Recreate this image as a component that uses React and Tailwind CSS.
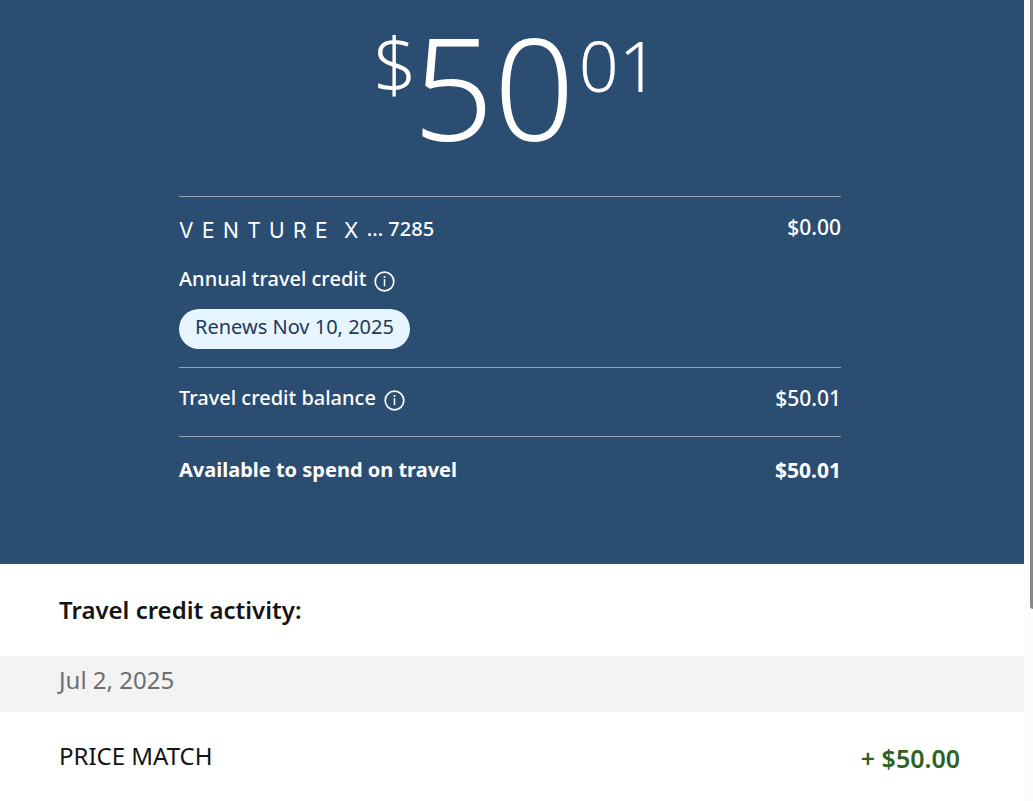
const summary = {
  dollars: "50",
  cents: "01",
  lastFour: "7285",
  annualCredit: "$0.00",
  renews: "Renews Nov 10, 2025",
  balance: "$50.01",
  available: "$50.01",
};

const activity = [
  { id: 1, date: "Jul 2, 2025", title: "PRICE MATCH", amount: "+ $50.00" },
];

function InfoButton({ label }) {
  return (
    <button type="button" aria-label={label} className="ml-2 mt-1 shrink-0">
      <svg width="21" height="21" viewBox="0 0 21 21" fill="none">
        <circle cx="10.5" cy="10.5" r="9.3" stroke="currentColor" strokeWidth="1.7" />
        <path d="M10.5 8.2v7" stroke="currentColor" strokeWidth="1.5" />
        <circle cx="10.5" cy="5.9" r="1" fill="currentColor" />
      </svg>
    </button>
  );
}

export default function App() {
  return (
    <div className="flex h-screen overflow-hidden bg-white font-['Noto_Sans','Open_Sans',sans-serif]">
      <main className="min-w-0 flex-1">
        <section className="bg-[#2b4d71] pr-1 pb-20 text-white">
          {/* Total */}
          <div className="flex justify-center pl-3 font-light">
            <span className="-mr-1 pt-4 text-[76px] leading-[94px]">$</span>
            <span className="mr-1 text-[142px] leading-[172px]">{summary.dollars}</span>
            <span className="pt-4 text-[70px] leading-[98px]">{summary.cents}</span>
          </div>

          {/* Breakdown */}
          <div className="mx-auto mt-6 max-w-[662px] text-[20px] leading-7 font-medium">
            <div className="flex justify-between border-t border-[#92a5b8] pt-4 pb-[18px]">
              <div>
                <div className="flex items-center">
                  <span className="flex gap-2 pt-1 font-['Inter','Open_Sans',sans-serif] text-[21px] font-normal tracking-[0.4em]">
                    <span>VENTURE</span>
                    <span>X</span>
                  </span>
                  <span>... {summary.lastFour}</span>
                </div>
                <div className="mt-5 flex items-center">
                  <span>Annual travel credit</span>
                  <InfoButton label="About the annual travel credit" />
                </div>
                <div className="mt-4 inline-block rounded-[20px] bg-[#e6f5ff] px-4 pt-1 pb-2 font-normal text-[#1d3a57]">
                  {summary.renews}
                </div>
              </div>
              <span className="text-[21px]">{summary.annualCredit}</span>
            </div>

            <div className="flex justify-between border-t border-[#92a5b8] pt-4 pb-6">
              <div className="flex items-center">
                <span>Travel credit balance</span>
                <InfoButton label="About the travel credit balance" />
              </div>
              <span className="text-[21px]">{summary.balance}</span>
            </div>

            <div className="flex justify-between border-t border-[#92a5b8] pt-[19px] font-bold">
              <span>Available to spend on travel</span>
              <span className="text-[21px]">{summary.available}</span>
            </div>
          </div>
        </section>

        {/* Activity */}
        <section className="text-[24px] leading-8 text-[#141414]">
          <h2 className="px-[59px] pt-[30px] pb-[30px] font-semibold">Travel credit activity:</h2>
          {activity.map((item) => (
            <div key={item.id}>
              <div className="bg-[#f3f3f3] px-[59px] pt-2 pb-4 text-[#6e6e6e]">{item.date}</div>
              <div className="flex items-start justify-between pt-7 pr-16 pl-[59px]">
                <span>{item.title}</span>
                <span className="pt-[2px] text-[25px] font-semibold text-[#30621f]">{item.amount}</span>
              </div>
            </div>
          ))}
        </section>
      </main>

      {/* Scroll track */}
      <div className="flex w-[9px] justify-end bg-[#fcfcfc]">
        <div className="h-[76%] w-[3px] rounded-bl-[3px] bg-[#888888]" />
      </div>
    </div>
  );
}
